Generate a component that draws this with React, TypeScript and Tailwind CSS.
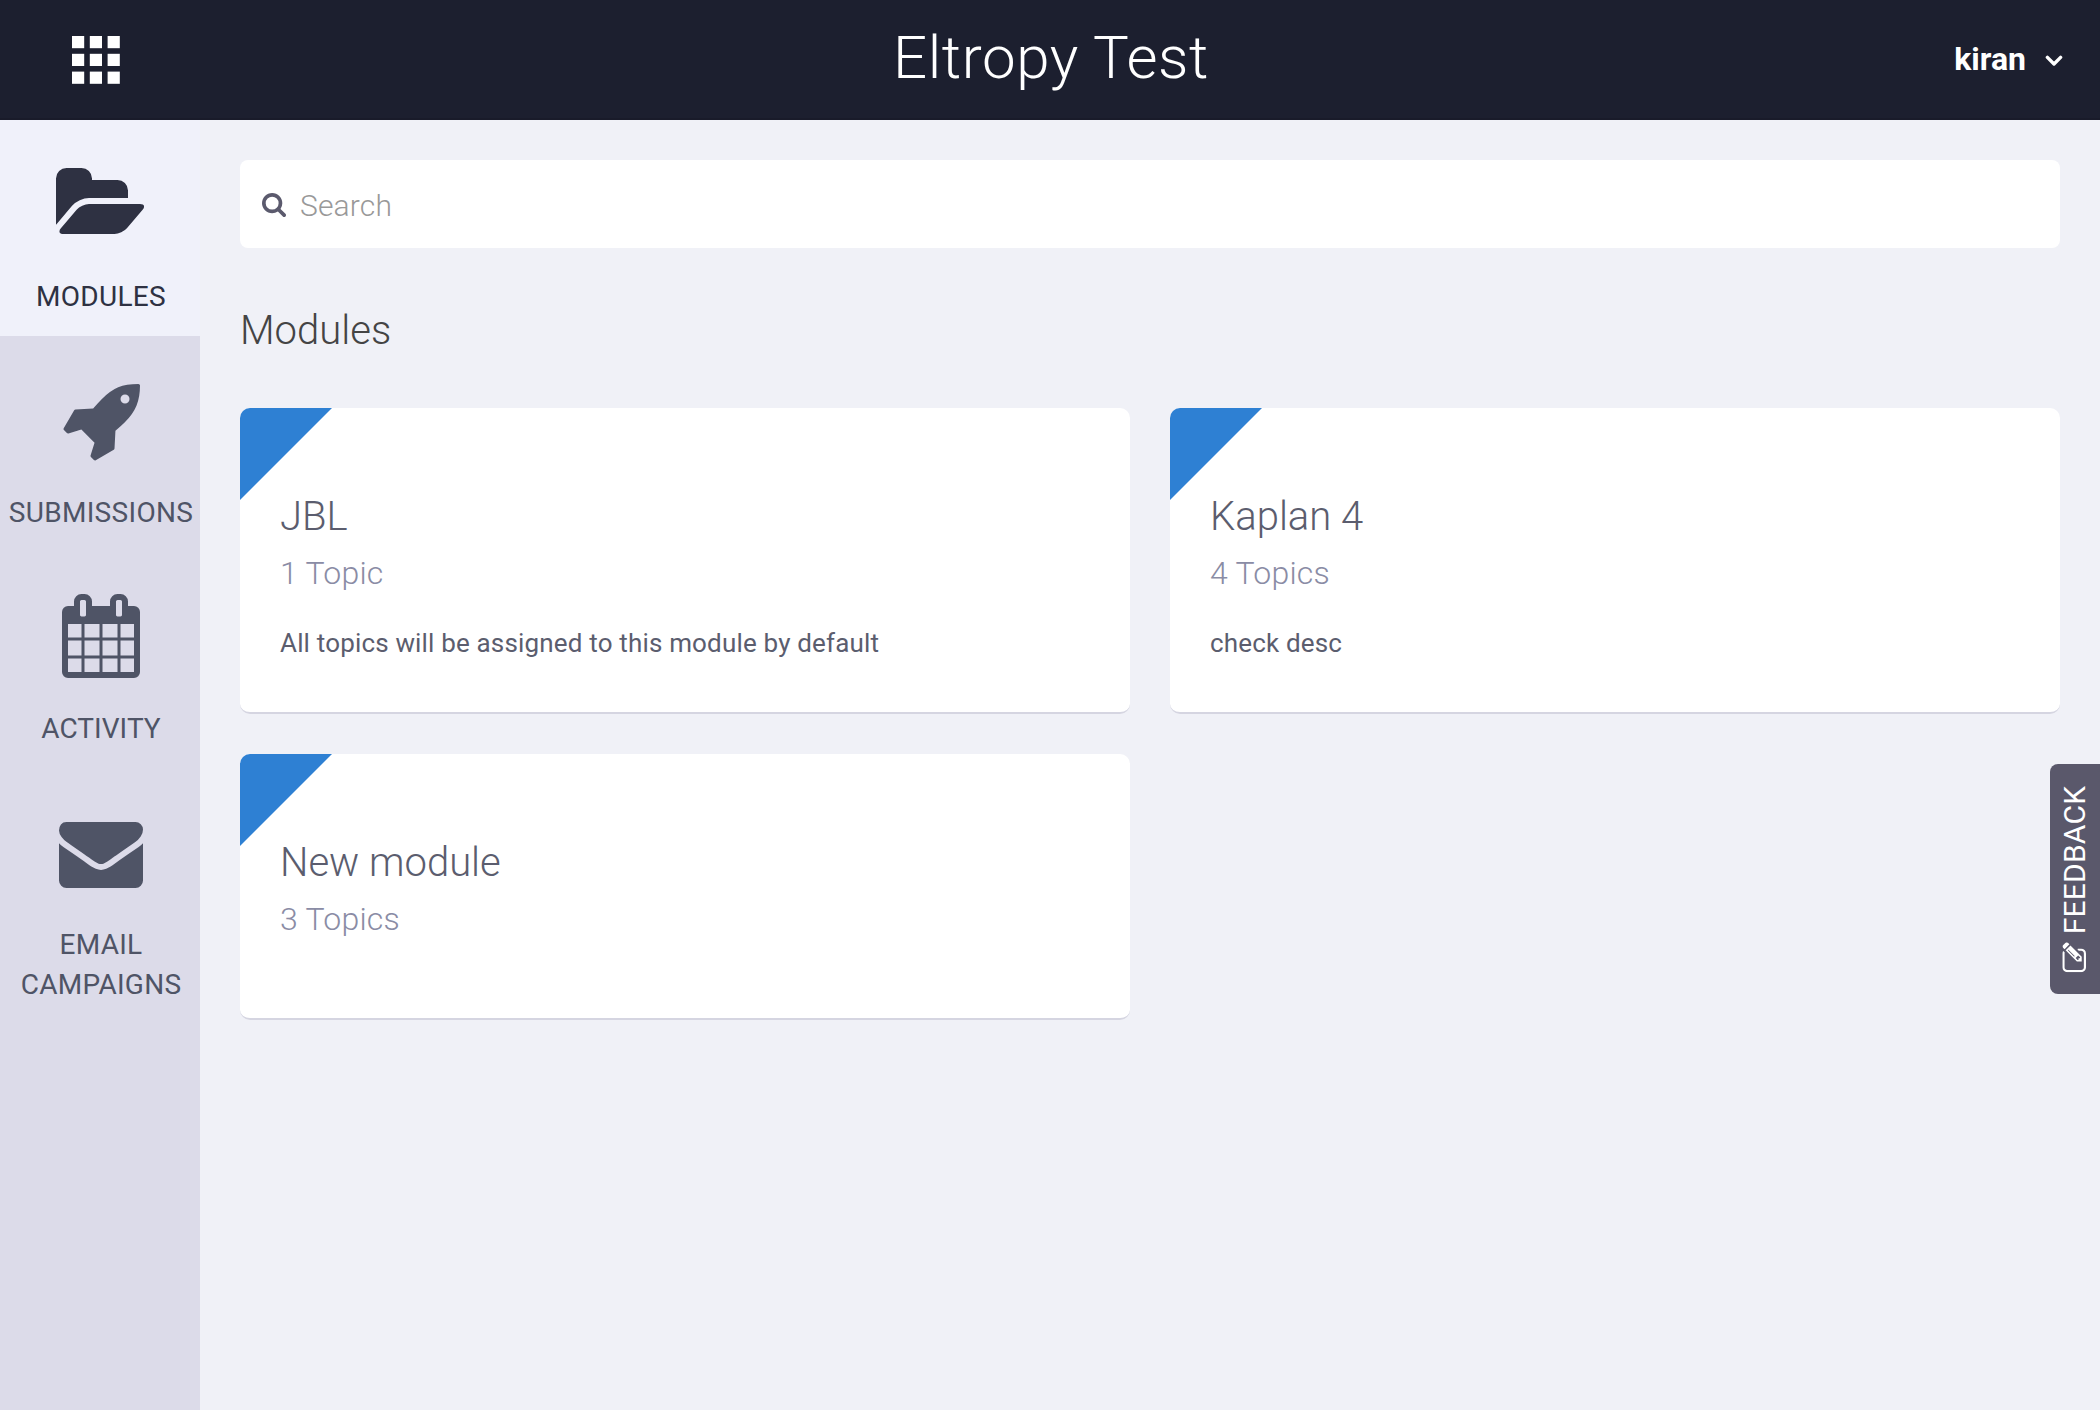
import React from "react";

type IconProps = { viewBox: string; d: string; className: string };

const Icon = ({ viewBox, d, className }: IconProps) => (
  <svg viewBox={viewBox} className={className} fill="currentColor" aria-hidden="true">
    <path d={d} />
  </svg>
);

const FOLDER =
  "M1943 952q0 31-31 66l-336 396q-43 51-120.5 86.5t-143.5 35.5h-1088q-34 0-60.5-13t-26.5-43q0-31 31-66l336-396q43-51 120.5-86.5t143.5-35.5h1088q34 0 60.5 13t26.5 43zm-343-344v160h-832q-94 0-197 47.5t-164 119.5l-337 396-5 6q0-4-.5-12.5t-.5-12.5v-960q0-92 66-158t158-66h320q92 0 158 66t66 158v32h544q92 0 158 66t66 158z";
const ROCKET =
  "M1440 448q0-40-28-68t-68-28-68 28-28 68 28 68 68 28 68-28 28-68zm224-288q0 249-75.5 430.5t-253.5 360.5q-81 80-195 176l-20 379q-2 16-16 26l-384 224q-7 4-16 4-12 0-23-9l-64-64q-13-14-8-32l85-276-281-281-276 85q-3 1-9 1-14 0-23-9l-64-64q-17-19-5-39l224-384q10-14 26-16l379-20q96-114 176-195 188-187 358-258t431-71q14 0 24 9.5t10 22.5z";
const CALENDAR =
  "M192 1664h288v-288h-288v288zm352 0h320v-288h-320v288zm-352-352h288v-320h-288v320zm352 0h320v-320h-320v320zm-352-384h288v-288h-288v288zm736 736h320v-288h-320v288zm-384-736h320v-288h-320v288zm768 736h288v-288h-288v288zm-384-352h320v-320h-320v320zm-352-864v-288q0-13-9.5-22.5t-22.5-9.5h-64q-13 0-22.5 9.5t-9.5 22.5v288q0 13 9.5 22.5t22.5 9.5h64q13 0 22.5-9.5t9.5-22.5zm736 864h288v-320h-288v320zm-384-384h320v-288h-320v288zm384 0h288v-288h-288v288zm32-480v-288q0-13-9.5-22.5t-22.5-9.5h-64q-13 0-22.5 9.5t-9.5 22.5v288q0 13 9.5 22.5t22.5 9.5h64q13 0 22.5-9.5t9.5-22.5zm384-64v1280q0 52-38 90t-90 38h-1408q-52 0-90-38t-38-90v-1280q0-52 38-90t90-38h128v-96q0-66 47-113t113-47h64q66 0 113 47t47 113v96h384v-96q0-66 47-113t113-47h64q66 0 113 47t47 113v96h128q52 0 90 38t38 90z";
const ENVELOPE =
  "M1792 710v794q0 66-47 113t-113 47h-1472q-66 0-113-47t-47-113v-794q44 49 101 87 362 246 497 345 57 42 92.5 65.5t94.5 48 110 24.5h2q51 0 110-24.5t94.5-48 92.5-65.5q170-123 498-345 57-39 100-87zm0-294q0 79-49 151t-122 123q-376 261-468 325-10 7-42.5 31t-54 38.5-52 32.5-57.5 27-50 9h-2q-23 0-50-9t-57.5-27-52-32.5-54-38.5-42.5-31q-91-64-262-182.5t-205-142.5q-62-42-117-115.5t-55-136.5q0-78 41.5-130t118.5-52h1472q65 0 112.5 47t47.5 113z";
const SEARCH =
  "M1216 832q0-185-131.5-316.5t-316.5-131.5-316.5 131.5-131.5 316.5 131.5 316.5 316.5 131.5 316.5-131.5 131.5-316.5zm512 832q0 52-38 90t-90 38q-54 0-90-38l-343-342q-179 124-399 124-143 0-273.5-55.5t-225-150-150-225-55.5-273.5 55.5-273.5 150-225 225-150 273.5-55.5 273.5 55.5 225 150 150 225 55.5 273.5q0 220-124 399l343 343q37 37 37 90z";
const EDIT =
  "M888 1184l116-116-152-152-116 116v56h96v96h56zm440-720q-16-16-33 1l-350 350q-17 17-1 33t33-1l350-350q17-17 1-33zm80 594v190q0 119-84.5 203.5t-203.5 84.5h-832q-119 0-203.5-84.5t-84.5-203.5v-832q0-119 84.5-203.5t203.5-84.5h832q63 0 117 25 15 7 18 23 3 17-9 29l-49 49q-14 14-32 8-23-6-45-6h-832q-66 0-113 47t-47 113v832q0 66 47 113t113 47h832q66 0 113-47t47-113v-126q0-13 9-22l64-64q15-15 35-7t20 29zm-96-738l288 288-672 672h-288v-288zm444 132l-92 92-288-288 92-92q28-28 68-28t68 28l152 152q28 28 28 68t-28 68z";

const NAV = [
  { label: "MODULES", d: FOLDER, viewBox: "64 0 1920 1792", size: "h-[84px] w-[90px]", tracking: "tracking-[0.3px]", active: true },
  { label: "SUBMISSIONS", d: ROCKET, viewBox: "0 0 1664 1792", size: "h-[84px] w-[78px]", tracking: "tracking-[0.3px]", active: false },
  { label: "ACTIVITY", d: CALENDAR, viewBox: "64 0 1664 1792", size: "h-[84px] w-[78px]", tracking: "tracking-[0.05px]", active: false },
  { label: "EMAIL CAMPAIGNS", d: ENVELOPE, viewBox: "0 0 1792 1792", size: "h-[84px] w-[84px]", tracking: "tracking-[0.25px]", active: false },
];

const MODULES = [
  { title: "JBL", topics: "1 Topic", desc: "All topics will be assigned to this module by default" },
  { title: "Kaplan 4", topics: "4 Topics", desc: "check desc" },
  { title: "New module", topics: "3 Topics", desc: "" },
];

const STEPS = [0, 17.8, 35.6];

export default function App() {
  return (
    <div className="relative flex h-[1410px] w-[2100px] flex-col overflow-hidden bg-[#f0f1f7] font-['Roboto',sans-serif]">
      <header className="grid h-[120px] shrink-0 grid-cols-3 items-center border-b-2 border-[#191b2a] bg-[#1c1f2f] text-white">
        <svg viewBox="0 0 48 48" className="mt-[2px] ml-[72px] h-12 w-12" fill="currentColor">
          {STEPS.map((y) => STEPS.map((x) => <rect key={`${x}-${y}`} x={x} y={y} width="12.2" height="12.2" />))}
        </svg>
        <h1 className="pb-[3px] pl-[2px] text-center text-[60px] leading-[60px] font-light tracking-[0.6px]">Eltropy Test</h1>
        <div className="flex items-center justify-end pr-[37px]">
          <span className="text-[32px] leading-[40px] font-bold">kiran</span>
          <svg viewBox="0 0 18 12" className="mt-[4px] ml-[19px] h-3 w-[18px]" fill="none" stroke="currentColor" strokeWidth="3.4" strokeLinecap="round" strokeLinejoin="round">
            <path d="M2.4 2.4 9 9 15.6 2.4" />
          </svg>
        </div>
      </header>

      <div className="flex flex-1">
        <nav className="flex w-[200px] shrink-0 flex-col bg-[#dcdbe9]">
          {NAV.map((item) => (
            <a
              key={item.label}
              className={
                item.active
                  ? "flex h-[216px] flex-col items-center bg-[#f0f1fa] pt-[42px] pl-[2px] text-[#2e3142]"
                  : "flex h-[216px] flex-col items-center pt-[42px] pl-[2px] text-[#4f5466]"
              }
            >
              <Icon viewBox={item.viewBox} d={item.d} className={`${item.size} shrink-0`} />
              <span className={`mt-[31px] text-center text-[28px] leading-[40px] ${item.tracking}`}>{item.label}</span>
            </a>
          ))}
        </nav>

        <main className="flex-1 px-10 pt-10">
          <div className="flex h-[88px] items-center rounded-lg bg-white pl-[22px]">
            <Icon viewBox="64 128 1664 1664" d={SEARCH} className="mt-[2px] h-6 w-6 text-[#5b5a6d]" />
            <span className="mt-[4px] ml-[14px] text-[30px] leading-[40px] font-light tracking-[0.15px] text-[#999999]">Search</span>
          </div>
          <h2 className="mt-[57px] text-[40px] leading-[52px] font-light text-[#444444]">Modules</h2>
          <div className="mt-[51px] grid grid-cols-2 items-start gap-10">
            {MODULES.map((m) => (
              <article key={m.title} className="relative overflow-hidden rounded-[10px] border-b-2 border-[#d5d5e1] bg-white px-10 pt-[81px] pb-[49px]">
                <div className="absolute top-0 left-0 h-[92px] w-[92px] bg-[#2e80d3] [clip-path:polygon(0_0,100%_0,0_100%)]" />
                <h3 className="text-[40px] leading-[56px] font-light text-[#5b5d6e]">{m.title}</h3>
                <p className="mt-[8px] text-[32px] leading-[40px] font-light tracking-[0.25px] text-[#8a8ca5]">{m.topics}</p>
                <p className="mt-[30px] min-h-0 text-[26px] leading-[40px] tracking-[0.17px] text-[#5b5d6e]">{m.desc}</p>
              </article>
            ))}
          </div>
        </main>
      </div>

      <div className="absolute top-[764px] right-0 flex h-[230px] w-[50px] items-center justify-center rounded-l-lg bg-[#5a586b] text-white">
        <div className="flex shrink-0 -rotate-90 items-center">
          <Icon viewBox="0 128 1792 1408" d={EDIT} className="mb-[2px] h-6 w-[30px]" />
          <span className="ml-[8px] text-[30px] leading-[50px] tracking-[0.2px]">FEEDBACK</span>
        </div>
      </div>
    </div>
  );
}
